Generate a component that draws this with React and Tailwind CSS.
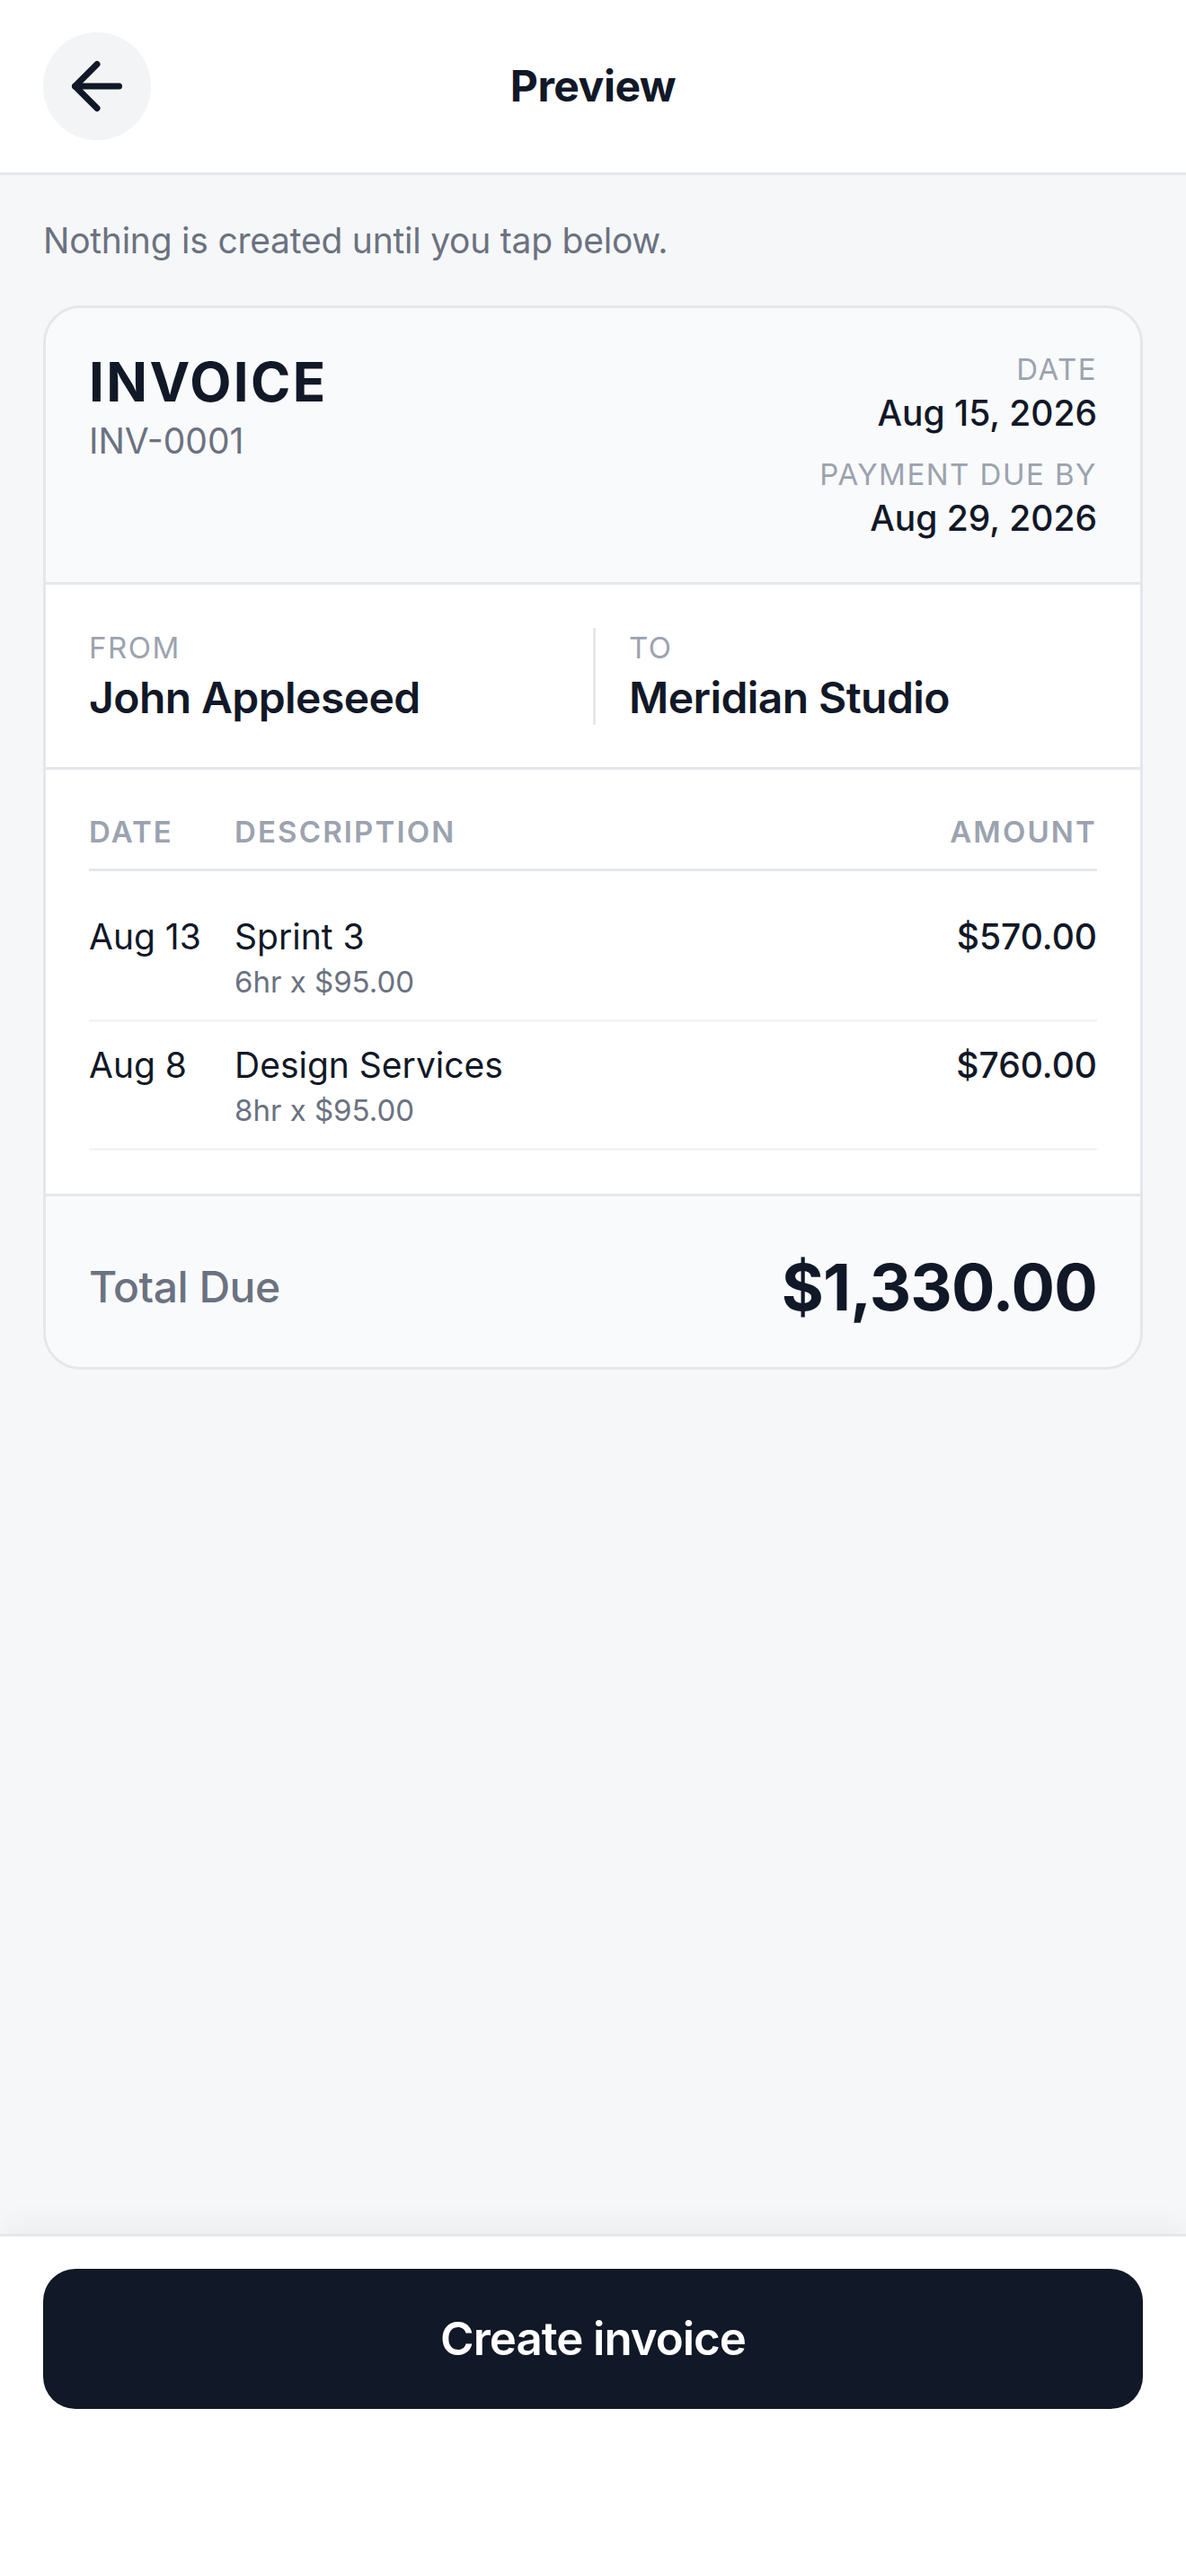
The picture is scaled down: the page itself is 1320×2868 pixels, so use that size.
import React from 'react';
import { ArrowLeft } from 'lucide-react';

const items = [
  { date: 'Aug 13', title: 'Sprint 3', detail: '6hr x $95.00', amount: '$570.00' },
  { date: 'Aug 8', title: 'Design Services', detail: '8hr x $95.00', amount: '$760.00' },
];

const Label = ({ children }) => (
  <div className="text-[33px] leading-[44px] tracking-[0.045em] text-[#9ca3af] uppercase">
    {children}
  </div>
);

const App = () => {
  return (
    <div className="h-[2868px] flex flex-col bg-white font-['Inter','Noto_Sans',sans-serif] text-[#111827]">
      {/* Barra superior */}
      <header className="h-[195px] shrink-0 flex items-center justify-between px-[48px] border-b-[3px] border-[#e5e7eb] bg-white">
        <button className="w-[120px] h-[120px] rounded-full bg-[#f3f4f6] flex items-center justify-center">
          <ArrowLeft size={84} strokeWidth={2} color="#111827" />
        </button>
        <h1 className="text-[48px] font-bold leading-[60px] tracking-[-0.01em]">Preview</h1>
        <div className="w-[120px]" />
      </header>

      {/* Contenido */}
      <main className="flex-1 bg-[#f6f7f9] px-[48px] pt-[47px]">
        <p className="text-[39px] leading-[52px] tracking-[-0.006em] text-[#6b7280]">
          Nothing is created until you tap below.
        </p>

        <div className="mt-[46px] rounded-[42px] border-[3px] border-[#e5e7eb] overflow-hidden bg-white">
          {/* Cabecera de la factura */}
          <div className="bg-[#f9fafb] px-[48px] pt-[46px] pb-[45px] border-b-[3px] border-[#e5e7eb] flex justify-between items-start">
            <div>
              <div className="text-[60px] leading-[72px] font-bold tracking-[0.04em]">INVOICE</div>
              <div className="mt-[4px] text-[39px] leading-[52px] text-[#6b7280]">INV-0001</div>
            </div>
            <div className="text-right">
              <Label>Date</Label>
              <div className="mt-[1px] text-[39px] leading-[52px] font-medium">Aug 15, 2026</div>
              <div className="mt-[20px]">
                <Label>Payment due by</Label>
              </div>
              <div className="mt-[1px] text-[39px] leading-[52px] font-medium">Aug 29, 2026</div>
            </div>
          </div>

          {/* De / Para */}
          <div className="px-[48px] pt-[48px] pb-[47px] border-b-[3px] border-[#e5e7eb] grid grid-cols-2">
            <div>
              <Label>From</Label>
              <div className="mt-[4px] text-[48px] leading-[60px] font-semibold tracking-[-0.012em]">John Appleseed</div>
            </div>
            <div className="border-l-[3px] border-[#e5e7eb] pl-[37px]">
              <Label>To</Label>
              <div className="mt-[4px] text-[48px] leading-[60px] font-semibold tracking-[-0.012em]">Meridian Studio</div>
            </div>
          </div>

          {/* Conceptos */}
          <div className="px-[48px] pt-[47px] pb-[48px] border-b-[3px] border-[#e5e7eb]">
            <div className="flex pb-[19px] border-b-[3px] border-[#e5e7eb] text-[33px] leading-[44px] font-semibold tracking-[0.065em] text-[#9ca3af]">
              <div className="w-[162px]">DATE</div>
              <div className="flex-1">DESCRIPTION</div>
              <div>AMOUNT</div>
            </div>
            <div className="mt-[25px]">
              {items.map((item) => (
                <div key={item.title} className="flex items-start pt-[22px] pb-[20px] border-b-[3px] border-[#f3f4f6]">
                  <div className="w-[162px] text-[39px] leading-[52px]">{item.date}</div>
                  <div className="flex-1">
                    <div className="text-[39px] leading-[52px]">{item.title}</div>
                    <div className="mt-[2px] text-[33px] leading-[44px] text-[#6b7280]">{item.detail}</div>
                  </div>
                  <div className="text-[39px] leading-[52px] font-medium">{item.amount}</div>
                </div>
              ))}
            </div>
          </div>

          {/* Total */}
          <div className="bg-[#f9fafb] px-[48px] pt-[58px] pb-[46px] flex items-center justify-between">
            <div className="text-[48px] leading-[86px] font-medium tracking-[-0.01em] text-[#6b7280]">Total Due</div>
            <div className="text-[72px] leading-[86px] font-bold tracking-[-0.012em]">$1,330.00</div>
          </div>
        </div>
      </main>

      {/* Botón inferior */}
      <div className="shrink-0 bg-white border-t-[3px] border-[#e5e7eb] px-[48px] pt-[36px] pb-[186px] shadow-[0_-12px_30px_rgba(0,0,0,0.04)]">
        <button className="w-full h-[156px] rounded-[36px] bg-[#111827] text-white text-[51px] font-semibold tracking-[-0.02em]">
          Create invoice
        </button>
      </div>
    </div>
  );
};

export default App;
